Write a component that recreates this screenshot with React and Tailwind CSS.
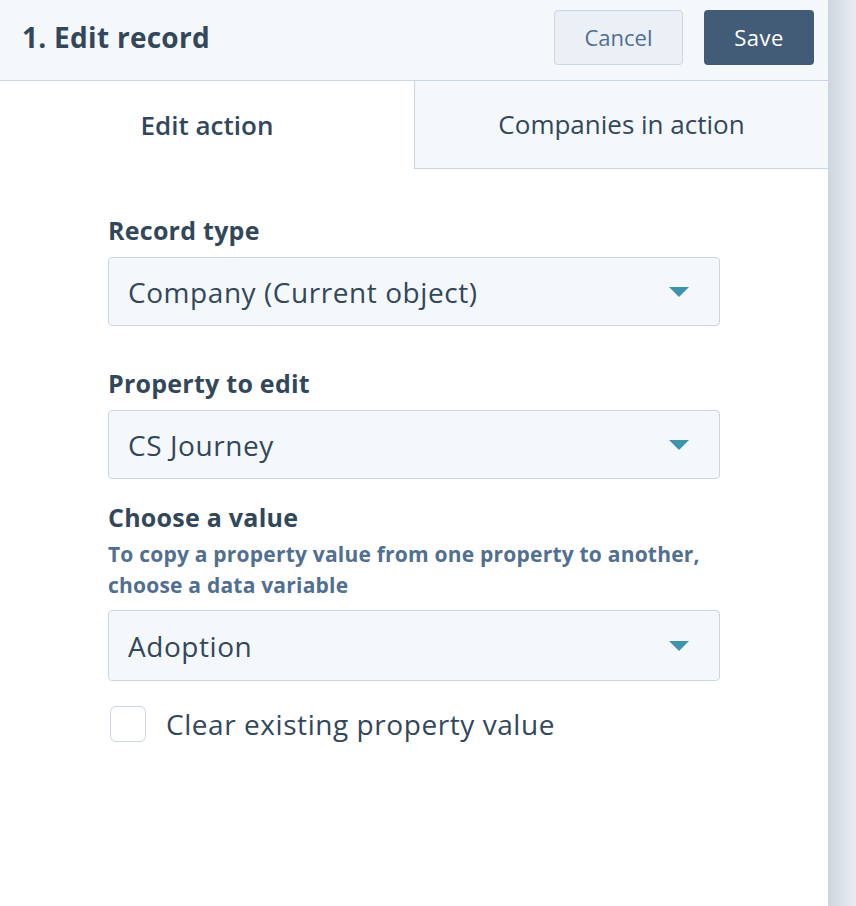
import { useState } from 'react';

const Caret = () => (
  <svg width="20" height="10" viewBox="0 0 20 10" className="shrink-0">
    <path d="M0 0 L20 0 L10 10 Z" fill="#3f93ae" />
  </svg>
);

const Select = ({ value, h = 'h-[69px]' }) => (
  <div
    className={`${h} w-[612px] flex items-center justify-between pl-[19px] pr-[30px] bg-[#f5f8fa] border border-[#cbd6e2] rounded-[4px]`}
  >
    <span className="text-[28px] tracking-[0.02em] text-[#33475b]">{value}</span>
    <Caret />
  </div>
);

const App = () => {
  const [tab, setTab] = useState('edit');
  const [clear, setClear] = useState(false);

  return (
    <div className="flex w-full h-[906px] font-['Open_Sans',sans-serif] text-[#33475b]">
      <div className="w-[828px] h-full bg-white flex flex-col">
        {/* header */}
        <div className="h-[81px] shrink-0 flex items-center justify-between pl-[22px] pr-[14px] pb-[6px] bg-[#f5f8fa] border-b border-[#cbd6e2]">
          <h1 className="text-[28px] font-bold tracking-[0.01em]">1. Edit record</h1>
          <div className="flex gap-[21px]">
            <button className="w-[129px] h-[55px] rounded-[4px] border border-[#cbd6e2] bg-[#eaf0f6] text-[#506e91] text-[22px]">
              Cancel
            </button>
            <button className="w-[110px] h-[55px] rounded-[4px] bg-[#425b76] text-white text-[22px] font-medium tracking-[0.02em]">
              Save
            </button>
          </div>
        </div>

        {/* tabs */}
        <div className="h-[88px] shrink-0 flex">
          <button
            onClick={() => setTab('edit')}
            className="w-[414px] bg-white text-[26px] font-semibold"
          >
            Edit action
          </button>
          <button
            onClick={() => setTab('companies')}
            className="flex-1 bg-[#f5f8fa] border-l border-b border-[#cbd6e2] text-[26px]"
          >
            Companies in action
          </button>
        </div>

        {/* form */}
        <div className="pl-[108px] pt-[47px] flex flex-col">
          <label className="text-[25px] leading-[28px] font-bold tracking-[0.01em]">Record type</label>
          <div className="mt-[13px]">
            <Select value="Company (Current object)" />
          </div>

          <label className="mt-[43px] text-[25px] leading-[28px] font-bold tracking-[0.01em]">Property to edit</label>
          <div className="mt-[13px]">
            <Select value="CS Journey" />
          </div>

          <label className="mt-[24px] text-[25px] leading-[28px] font-bold tracking-[0.01em]">Choose a value</label>
          <p className="mt-[8px] w-[612px] text-[21px] leading-[31px] font-bold tracking-[0.01em] text-[#516f90]">
            To copy a property value from one property to another, choose a data variable
          </p>
          <div className="mt-[9px]">
            <Select value="Adoption" h="h-[71px]" />
          </div>

          <label className="mt-[22px] flex items-center gap-[20px] cursor-pointer">
            <span
              onClick={() => setClear(!clear)}
              className="ml-[2px] w-[36px] h-[36px] rounded-[6px] border border-[#cbd6e2] bg-white"
            />
            <span className="text-[28px] tracking-[0.02em]">Clear existing property value</span>
          </label>
        </div>
      </div>
      <div className="flex-1 h-full bg-gradient-to-r from-[#cdd5df] to-[#e9eef3]" />
    </div>
  );
};

export default App;
